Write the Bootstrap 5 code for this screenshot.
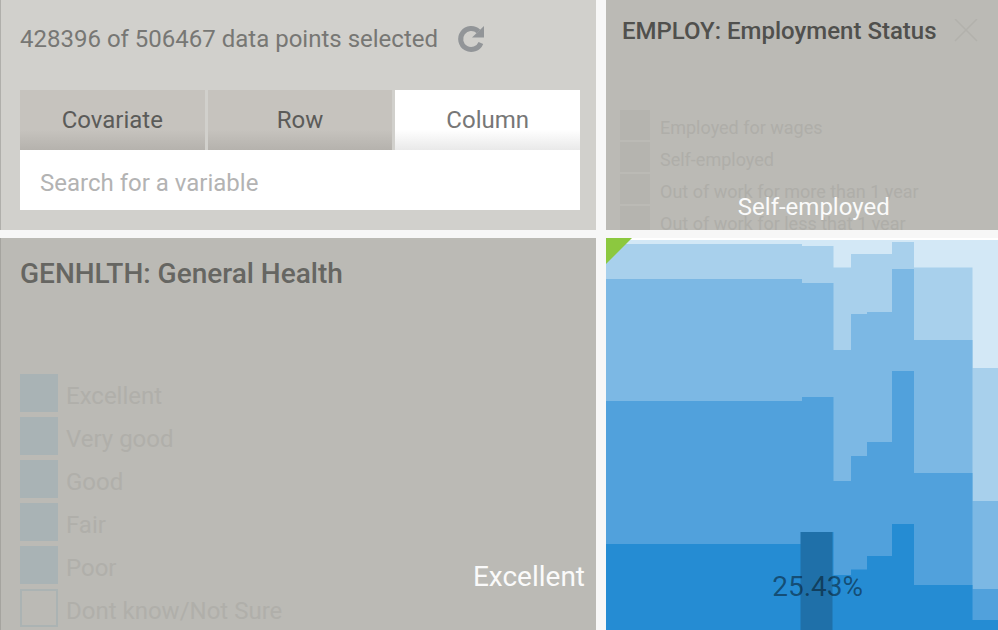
<!DOCTYPE html>
<html lang="en">
<head>
<meta charset="utf-8">
<meta name="viewport" content="width=device-width, initial-scale=1">
<title>Survey explorer</title>
<link href="https://cdn.jsdelivr.net/npm/bootstrap@5.3.0/dist/css/bootstrap.min.css" rel="stylesheet">
<style>
  body { font-family: Roboto, "Liberation Sans", sans-serif; background: #f7f7f7; color: #777774; font-size: 24px; line-height: 30px; }
  .board { display: grid; grid-template-columns: minmax(0, 596fr) minmax(0, 392fr); grid-template-rows: auto minmax(0, 1fr); gap: 8px 10px; height: 100vh; min-height: 400px; }
  .panel { position: relative; overflow: hidden; min-width: 0; }
  .panel-query { background: #d1d0cc; padding: 24px 16px 20px 19px; border-left: 1px solid #b0afab; }
  .panel-var { background: #bbbab5; }
  .panel-health { padding: 20px 10px 0 19px; border-left: 1px solid #a5a49f; }
  /* The query panel sets the row's height; a longer legend is clipped. */
  .panel-employ { height: 0; min-height: 100%; padding: 16px 20px 0 14px; }
  .panel-chart { background: #fff; }
  .status-line { margin-bottom: 36px; }
  .reload { color: #929598; line-height: 0; margin-left: 18px; }
  .tabs { gap: 3px; }
  .tabs .tab { flex: 1 1 0; height: 60px; border: 0; color: #5b5b59; background: linear-gradient(#c6c3be 66%, #b5b2ad); }
  .tabs .tab.active { color: #777; background: linear-gradient(#fff 66%, #e9e9e9); }
  .search { height: 60px; padding: 6px 20px 0; border: 0; border-radius: 0; font-size: 24px; color: #555; background: #fff; }
  .search::placeholder { color: #b3b3b3; opacity: 1; }
  .var-title { font-weight: 500; margin: 0; }
  .panel-health .var-title { font-size: 28px; line-height: 32px; color: #666662; }
  .panel-employ .var-title { font-size: 24px; line-height: 30px; color: #50504d; padding-left: 2px; white-space: nowrap; }
  .close-x { color: #b2b1ac; line-height: 0; }
  .legend-box { appearance: none; flex: none; margin: 0; border: 2px solid #abb3b3; }
  .legend-box:checked { background: #a9b3b5; border-color: #a9b3b5; }
  .legend-health { margin-top: 84px; gap: 5px; color: #b0afaa; }
  .legend-health .legend-box { width: 38px; height: 38px; }
  .legend-health label { padding: 6px 0 0 8px; line-height: 32px; }
  .legend-employ { margin-top: 64px; gap: 2px; color: #afaea9; font-size: 18px; }
  .legend-employ .legend-box { width: 30px; height: 30px; }
  .legend-employ .legend-box:checked { background: #b5b4af; border-color: #b5b4af; }
  .legend-employ label { padding: 5px 0 0 10px; line-height: 25px; white-space: nowrap; }
  .axis-tip { position: absolute; color: #fafafa; white-space: nowrap; }
  .tip-row { right: 11px; bottom: 37px; font-size: 28px; line-height: 32px; }
  .tip-col { left: 53%; bottom: 8px; transform: translateX(-50%); }
  .tip-value { left: 54%; bottom: 27px; transform: translateX(-50%); font-size: 28px; line-height: 32px; color: rgba(0, 0, 0, .45); }
</style>
<script src="https://cdn.jsdelivr.net/npm/bootstrap@5.3.0/dist/js/bootstrap.bundle.min.js"></script>
</head>
<body>
<main class="board">
  <section class="panel panel-query">
    <div class="status-line d-flex align-items-center">
      <span>428396 of 506467 data points selected</span>
      <button type="button" class="reload btn p-0 border-0" aria-label="Reset selection">
        <svg width="30" height="30" viewBox="0 0 30 30" aria-hidden="true"><path d="M24.900 19A10.500 10.500 0 1 1 22.500 7.500" fill="none" stroke="currentColor" stroke-width="5"/><path d="M28 2v11.500H16z" fill="currentColor"/></svg>
      </button>
    </div>
    <div class="tabs d-flex" role="tablist">
      <button type="button" class="tab" role="tab">Covariate</button>
      <button type="button" class="tab" role="tab">Row</button>
      <button type="button" class="tab active" role="tab" aria-selected="true">Column</button>
    </div>
    <input type="text" class="search form-control" placeholder="Search for a variable" aria-label="Search for a variable">
  </section>

  <section class="panel panel-var panel-employ">
    <div class="d-flex justify-content-between align-items-center">
      <h2 class="var-title">EMPLOY: Employment Status</h2>
      <button type="button" class="close-x btn p-0 border-0" aria-label="Close">
        <svg width="24" height="24" viewBox="0 0 24 24" aria-hidden="true"><path d="M1 0l22 22M23 0L1 22" stroke="currentColor" stroke-width="1.500"/></svg>
      </button>
    </div>
    <div class="legend-employ d-flex flex-column">
      <div class="d-flex"><input type="checkbox" class="legend-box" id="e1" checked><label for="e1">Employed for wages</label></div>
      <div class="d-flex"><input type="checkbox" class="legend-box" id="e2" checked><label for="e2">Self-employed</label></div>
      <div class="d-flex"><input type="checkbox" class="legend-box" id="e3" checked><label for="e3">Out of work for more than 1 year</label></div>
      <div class="d-flex"><input type="checkbox" class="legend-box" id="e4" checked><label for="e4">Out of work for less that 1 year</label></div>
    </div>
    <div class="axis-tip tip-col">Self-employed</div>
  </section>

  <section class="panel panel-var panel-health">
    <h2 class="var-title">GENHLTH: General Health</h2>
    <div class="legend-health d-flex flex-column">
      <div class="d-flex"><input type="checkbox" class="legend-box" id="h1" checked><label for="h1">Excellent</label></div>
      <div class="d-flex"><input type="checkbox" class="legend-box" id="h2" checked><label for="h2">Very good</label></div>
      <div class="d-flex"><input type="checkbox" class="legend-box" id="h3" checked><label for="h3">Good</label></div>
      <div class="d-flex"><input type="checkbox" class="legend-box" id="h4" checked><label for="h4">Fair</label></div>
      <div class="d-flex"><input type="checkbox" class="legend-box" id="h5" checked><label for="h5">Poor</label></div>
      <div class="d-flex"><input type="checkbox" class="legend-box" id="h6"><label for="h6">Dont know/Not Sure</label></div>
    </div>
    <div class="axis-tip tip-row">Excellent</div>
  </section>

  <section class="panel panel-chart">
    <svg class="d-block w-100 h-100" viewBox="0 0 392 392" preserveAspectRatio="none" role="img" aria-label="General health by employment status">
      <path fill="#d3e8f6" d="M0 2H392V392H0z"/>
      <path fill="#a8d0ec" d="M0 6H196V8H227.500V29.500H245V16H286V4H308V29.500H366.500V130H392V392H0z"/>
      <path fill="#7cb8e4" d="M0 41H196V45H227.500V112H245V76H261V74H286V31H308V102H366.500V263H392V392H0z"/>
      <path fill="#51a1dc" d="M0 163H196V159H227.500V243H245V218H261V204H286V133H308V235H366.500V351H392V392H0z"/>
      <path fill="#258cd3" d="M0 306H196V294H227.500V337H245V331.500H261V318H286V286H308V347H366.500V382H392V392H0z"/>
      <path fill="#1f70a9" d="M194.500 294H226.500V392H194.500z"/>
      <path fill="#8cc83f" d="M0 0H26L0 26z"/>
    </svg>
    <div class="axis-tip tip-value">25.43%</div>
  </section>
</main>
</body>
</html>
